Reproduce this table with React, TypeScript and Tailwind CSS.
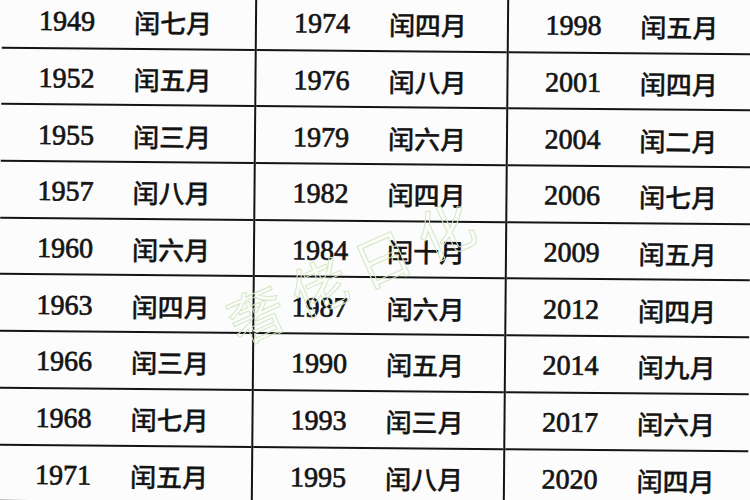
const columns = [
  [
    ["1949", "闰七月"],
    ["1952", "闰五月"],
    ["1955", "闰三月"],
    ["1957", "闰八月"],
    ["1960", "闰六月"],
    ["1963", "闰四月"],
    ["1966", "闰三月"],
    ["1968", "闰七月"],
    ["1971", "闰五月"],
  ],
  [
    ["1974", "闰四月"],
    ["1976", "闰八月"],
    ["1979", "闰六月"],
    ["1982", "闰四月"],
    ["1984", "闰十月"],
    ["1987", "闰六月"],
    ["1990", "闰五月"],
    ["1993", "闰三月"],
    ["1995", "闰八月"],
  ],
  [
    ["1998", "闰五月"],
    ["2001", "闰四月"],
    ["2004", "闰二月"],
    ["2006", "闰七月"],
    ["2009", "闰五月"],
    ["2012", "闰四月"],
    ["2014", "闰九月"],
    ["2017", "闰六月"],
    ["2020", "闰四月"],
  ],
];

const App = () => {
  return (
    <div className="relative w-[750px] h-[500px] overflow-hidden bg-[#fcfcfc] text-[#141414]">
      {/* leap month table */}
      <div className="-mt-[5px] w-[750px] h-[510px] rotate-[0.5deg] grid grid-cols-[255px_251.5px_1fr]">
        {columns.map((col, ci) => (
          <div
            key={ci}
            className={ci < 2 ? "flex flex-col border-r-2 border-[#141414]" : "flex flex-col"}
          >
            {col.map(([year, month]) => (
              <div
                key={year}
                className="h-[56.7px] shrink-0 flex items-center pl-[37px] pt-[4px] border-b-2 border-[#141414]"
              >
                <span className="w-[95px] text-[28px] leading-none font-['Liberation_Serif',serif] [-webkit-text-stroke:0.7px_#141414]">
                  {year}
                </span>
                <span className="text-[26px] leading-none font-medium font-['Noto_Sans_CJK_SC',sans-serif] [-webkit-text-stroke:0.3px_#141414]">
                  {month}
                </span>
              </div>
            ))}
          </div>
        ))}
      </div>

      {/* watermark */}
      <div className="absolute left-[218px] top-[240px] -rotate-[24deg] text-[56px] leading-none tracking-[13px] text-transparent font-['Noto_Sans_CJK_SC',sans-serif] [-webkit-text-stroke:1px_#d3e8c2] select-none">
        奢佬日化
      </div>
    </div>
  );
};

export default App;
